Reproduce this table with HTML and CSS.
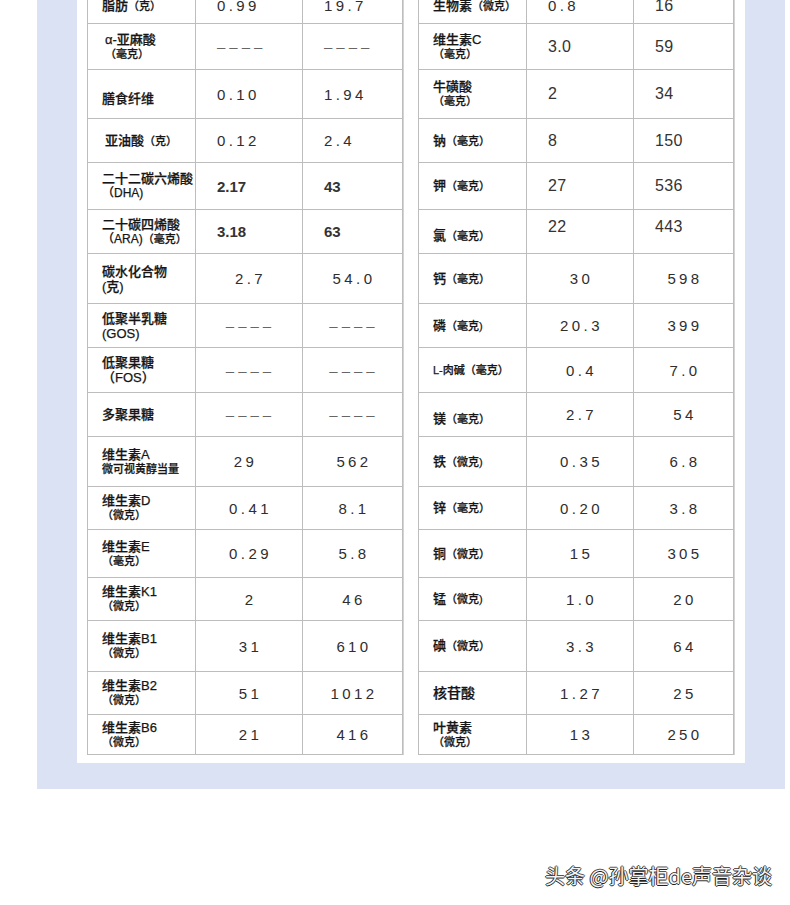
FILE: index.html
```html
<!DOCTYPE html>
<html lang="zh-CN">
<head>
<meta charset="utf-8">
<title>营养成分表</title>
<link rel="stylesheet" href="styles.css">
</head>
<body>
<div class="frame">
  <div class="sheet">
    <div class="tbl">
      <div class="k first"><span>脂肪<span class="u">（克）</span></span></div><div class="n sp l first">0.99</div><div class="n sp l first">19.7</div>
      <div class="k ind"><span>α-亚麻酸</span><span class="u">（毫克）</span></div><div class="n ds l">––––</div><div class="n ds l">––––</div>
      <div class="k lo"><span>膳食纤维</span></div><div class="n sp l">0.10</div><div class="n sp l">1.94</div>
      <div class="k ind"><span>亚油酸<span class="u">（克）</span></span></div><div class="n sp l">0.12</div><div class="n sp l">2.4</div>
      <div class="k"><span>二十二碳六烯酸</span><span class="u2">（DHA)</span></div><div class="n bd l">2.17</div><div class="n bd l">43</div>
      <div class="k"><span>二十碳四烯酸</span><span class="u2">（ARA)<span class="u">（毫克）</span></span></div><div class="n bd l">3.18</div><div class="n bd l">63</div>
      <div class="k"><span>碳水化合物</span><span>(克)</span></div><div class="n sp c">2.7</div><div class="n sp c">54.0</div>
      <div class="k"><span>低聚半乳糖</span><span>(GOS)</span></div><div class="n ds c">––––</div><div class="n ds c">––––</div>
      <div class="k"><span>低聚果糖</span><span>（FOS）</span></div><div class="n ds c">––––</div><div class="n ds c">––––</div>
      <div class="k"><span>多聚果糖</span></div><div class="n ds c">––––</div><div class="n ds c">––––</div>
      <div class="k"><span>维生素A</span><span class="u">微可视黄醇当量</span></div><div class="n sp c lft">29</div><div class="n sp c">562</div>
      <div class="k"><span>维生素D</span><span class="u">（微克）</span></div><div class="n sp c">0.41</div><div class="n sp c">8.1</div>
      <div class="k"><span>维生素E</span><span class="u">（毫克）</span></div><div class="n sp c">0.29</div><div class="n sp c">5.8</div>
      <div class="k"><span>维生素K1</span><span class="u">（微克）</span></div><div class="n sp c">2</div><div class="n sp c">46</div>
      <div class="k"><span>维生素B1</span><span class="u">（微克）</span></div><div class="n sp c">31</div><div class="n sp c">610</div>
      <div class="k"><span>维生素B2</span><span class="u">（微克）</span></div><div class="n sp c">51</div><div class="n sp c">1012</div>
      <div class="k"><span>维生素B6</span><span class="u">（微克）</span></div><div class="n sp c">21</div><div class="n sp c">416</div>
    </div>
    <div class="tbl">
      <div class="k first"><span>生物素<span class="u">（微克）</span></span></div><div class="n sp l first">0.8</div><div class="n pl l first">16</div>
      <div class="k"><span>维生素C</span><span class="u">（毫克）</span></div><div class="n pl l">3.0</div><div class="n pl l">59</div>
      <div class="k"><span>牛磺酸</span><span class="u">（毫克）</span></div><div class="n pl l">2</div><div class="n pl l">34</div>
      <div class="k"><span>钠<span class="u">（毫克）</span></span></div><div class="n pl l">8</div><div class="n pl l">150</div>
      <div class="k"><span>钾<span class="u">（毫克）</span></span></div><div class="n pl l">27</div><div class="n pl l">536</div>
      <div class="k lo"><span>氯<span class="u">（毫克）</span></span></div><div class="n pl l hi">22</div><div class="n pl l hi">443</div>
      <div class="k"><span>钙<span class="u">（毫克）</span></span></div><div class="n sp c">30</div><div class="n sp c">598</div>
      <div class="k"><span>磷<span class="u">（毫克)</span></span></div><div class="n sp c">20.3</div><div class="n sp c">399</div>
      <div class="k"><span class="u">L-肉碱（毫克）</span></div><div class="n sp c">0.4</div><div class="n sp c">7.0</div>
      <div class="k lo"><span>镁<span class="u">（毫克）</span></span></div><div class="n sp c">2.7</div><div class="n sp c">54</div>
      <div class="k"><span>铁<span class="u">（微克)</span></span></div><div class="n sp c">0.35</div><div class="n sp c">6.8</div>
      <div class="k"><span>锌<span class="u">（毫克）</span></span></div><div class="n sp c">0.20</div><div class="n sp c">3.8</div>
      <div class="k"><span>铜<span class="u">（微克）</span></span></div><div class="n sp c">15</div><div class="n sp c">305</div>
      <div class="k"><span>锰<span class="u">（微克)</span></span></div><div class="n sp c">1.0</div><div class="n sp c">20</div>
      <div class="k"><span>碘<span class="u">（微克）</span></span></div><div class="n sp c">3.3</div><div class="n sp c">64</div>
      <div class="k big"><span>核苷酸</span></div><div class="n sp c">1.27</div><div class="n sp c">25</div>
      <div class="k"><span>叶黄素</span><span class="u">（微克）</span></div><div class="n sp c">13</div><div class="n sp c">250</div>
    </div>
  </div>
</div>
<div class="mark">头条 @孙掌柜de声音杂谈</div>
</body>
</html>
```

FILE: styles.css
```css
html, body {
  margin: 0;
  padding: 0;
  background: #ffffff;
}

body {
  width: 790px;
  height: 905px;
  overflow: hidden;
  font-family: "Liberation Sans", "Noto Sans CJK SC", sans-serif;
}

.frame {
  margin: -21px 5px 0 37px;
  background: #dbe2f3;
  padding: 0 40px 26px 40px;
}

.sheet {
  background: #ffffff;
  padding: 0 11px 8px 10px;
  display: flex;
  gap: 15px;
}

.tbl {
  display: grid;
  grid-template-columns: 108px 107px 100px;
  grid-template-rows: 44px 46px 49px 44px 47px 44px 50px 44px 45px 44px 50px 43px 48px 43px 51px 43px 40px;
  border-left: 1px solid #bdbdbd;
  border-top: 1px solid #bdbdbd;
  box-shadow: 1px 0 0 #d4d4d4;
}

.tbl > div {
  box-sizing: border-box;
  border-right: 1px solid #bdbdbd;
  border-bottom: 1px solid #bdbdbd;
  display: flex;
}

.tbl > .first {
  padding-top: 8px;
}

.k {
  flex-direction: column;
  justify-content: center;
  padding-left: 14px;
  font-size: 13px;
  line-height: 15px;
  color: #151515;
  font-weight: 500;
  -webkit-text-stroke: 0.25px #151515;
  white-space: nowrap;
}

.k.ind {
  padding-left: 17px;
}

.k.lo {
  padding-top: 8px;
}

.k.big {
  font-size: 14px;
}

.k > span {
  display: block;
}

.u {
  font-size: 11px;
}

.u2 {
  font-size: 12px;
  letter-spacing: 0;
}

.n {
  align-items: center;
  color: #2e2e2e;
  white-space: nowrap;
}

.n.l {
  padding-left: 21px;
}

.n.c {
  justify-content: center;
  padding-left: 3px;
}

.n.c.lft {
  padding-right: 10px;
}

.n.hi {
  padding-bottom: 10px;
}

.sp {
  font-size: 15px;
  letter-spacing: 3.4px;
}

.bd {
  font-size: 15px;
  font-weight: bold;
  color: #333333;
}

.pl {
  font-size: 16px;
  letter-spacing: 0.3px;
  color: #333333;
}

.ds {
  font-size: 15px;
  letter-spacing: 4px;
  color: #666666;
}

.mark {
  margin-top: 75px;
  padding-right: 18px;
  text-align: right;
  font-family: "Noto Sans CJK SC", "Liberation Sans", sans-serif;
  font-size: 20px;
  line-height: 24px;
  color: #f4f4f4;
  text-shadow: -1px 0 0 #222, 0 1px 0 #222, 1px 0 0 #555, 0 -1px 0 #555;
}
```
